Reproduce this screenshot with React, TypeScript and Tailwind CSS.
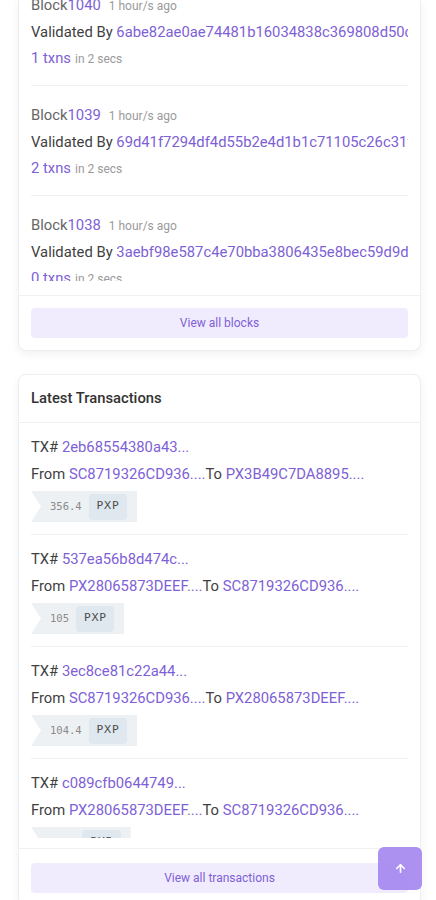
import React from 'react';
import { ArrowUp } from 'lucide-react';

type Block = { height: number; validator: string; txns: number };
type Tx = { hash: string; from: string; to: string; amount: string };

const blocks: Block[] = [
  { height: 1040, validator: '6abe82ae0ae74481b16034838c369808d50c4a1e', txns: 1 },
  { height: 1039, validator: '69d41f7294df4d55b2e4d1b1c71105c26c31f0a2', txns: 2 },
  { height: 1038, validator: '3aebf98e587c4e70bba3806435e8bec59d9d7b31', txns: 0 },
];

const txs: Tx[] = [
  { hash: '2eb68554380a43...', from: 'SC8719326CD936....', to: 'PX3B49C7DA8895....', amount: '356.4' },
  { hash: '537ea56b8d474c...', from: 'PX28065873DEEF....', to: 'SC8719326CD936....', amount: '105' },
  { hash: '3ec8ce81c22a44...', from: 'SC8719326CD936....', to: 'PX28065873DEEF....', amount: '104.4' },
  { hash: 'c089cfb0644749...', from: 'PX28065873DEEF....', to: 'SC8719326CD936....', amount: '98.2' },
];

const BlockRow = ({ b, last }: { b: Block; last: boolean }) => (
  <div className={`pt-[17px] pb-[15px] ${last ? '' : 'border-b border-[#f1f1f3]'}`}>
    <div className="h-6 leading-6 text-[14.8px] text-[#666] whitespace-nowrap">
      Block<span className="text-[#7e5fd6]">{b.height}</span>
      <span className="ml-2 text-[12px] leading-none text-[#9a9a9a]">1 hour/s ago</span>
    </div>
    <div className="mt-[3px] h-6 leading-6 text-[14.8px] text-[#3f3f3f] whitespace-nowrap overflow-hidden">
      Validated By <span className="text-[#7e5fd6]">{b.validator}</span>
    </div>
    <div className="mt-[2px] h-6 leading-6 text-[14.8px] whitespace-nowrap">
      <span className="text-[#7e5fd6]">{b.txns} txns</span>
      <span className="ml-1 text-[12px] leading-none text-[#9a9a9a]">in 2 secs</span>
    </div>
  </div>
);

const AmountTag = ({ amount }: { amount: string }) => (
  <div className="mt-[5px] flex w-fit items-center h-[31px] bg-[#eef1f4] pl-[19px] pr-[10px] [clip-path:polygon(0_0,100%_0,100%_100%,0_100%,10px_50%)]">
    <span className="text-[10.5px] text-[#8a8a8a] font-['DejaVu_Sans_Mono',monospace]">{amount}</span>
    <span className="ml-[7px] h-[26px] flex items-center px-2 rounded-sm bg-[#dfe7ef] text-[11px] tracking-wider text-[#4a4a4a] font-['DejaVu_Sans',sans-serif]">
      PXP
    </span>
  </div>
);

const TxRow = ({ t, last }: { t: Tx; last: boolean }) => (
  <div className={`pt-[12px] pb-[12px] ${last ? '' : 'border-b border-[#f1f1f3]'}`}>
    <div className="h-6 leading-6 text-[14.8px] text-[#3f3f3f] whitespace-nowrap">
      TX# <span className="text-[#7e5fd6]">{t.hash}</span>
    </div>
    <div className="mt-[3px] h-6 leading-6 text-[14.8px] text-[#3f3f3f] whitespace-nowrap">
      From <span className="text-[#7e5fd6]">{t.from}</span>To <span className="text-[#7e5fd6]">{t.to}</span>
    </div>
    <AmountTag amount={t.amount} />
  </div>
);

export default function App() {
  return (
    <div className="h-[900px] overflow-hidden bg-white pl-[18px] pr-[15px] font-['Roboto','Liberation_Sans',sans-serif]">
      {/* latest blocks (scrolled) */}
      <div className="rounded-b-lg border-x border-b border-[#efeff2] bg-white shadow-[0_3px_10px_rgba(0,0,0,0.06)]">
        <div className="px-3 h-[281px] overflow-hidden">
          <div className="-mt-[24px]">
            {blocks.map((b, i) => (
              <BlockRow key={b.height} b={b} last={i === blocks.length - 1} />
            ))}
          </div>
        </div>
        <div className="mt-[14px] border-t border-[#f1f1f3] px-3 py-3">
          <button className="w-full h-[30px] rounded-sm bg-[#f1ecfd] text-xs text-[#7e5fd6]">View all blocks</button>
        </div>
      </div>

      {/* latest transactions */}
      <div className="mt-[23px] rounded-lg border border-[#efeff2] bg-white shadow-[0_3px_10px_rgba(0,0,0,0.06)]">
        <div className="h-12 px-3 flex items-center border-b border-[#f1f1f3] text-[14.8px] font-medium text-[#333]">
          Latest Transactions
        </div>
        <div className="px-3 h-[415px] overflow-hidden">
          {txs.map((t, i) => (
            <TxRow key={t.hash} t={t} last={i === txs.length - 1} />
          ))}
        </div>
        <div className="mt-[10px] border-t border-[#f1f1f3] px-3 pt-[14px] pb-3">
          <button className="w-full h-[30px] rounded-sm bg-[#f1ecfd] text-xs text-[#7e5fd6]">View all transactions</button>
        </div>
      </div>

      <button className="fixed right-[14px] bottom-[10px] w-[44px] h-[43px] rounded-md bg-[#a385ef]/90 flex items-center justify-center">
        <ArrowUp size={13} strokeWidth={3} color="#ffffff" />
      </button>
    </div>
  );
}
